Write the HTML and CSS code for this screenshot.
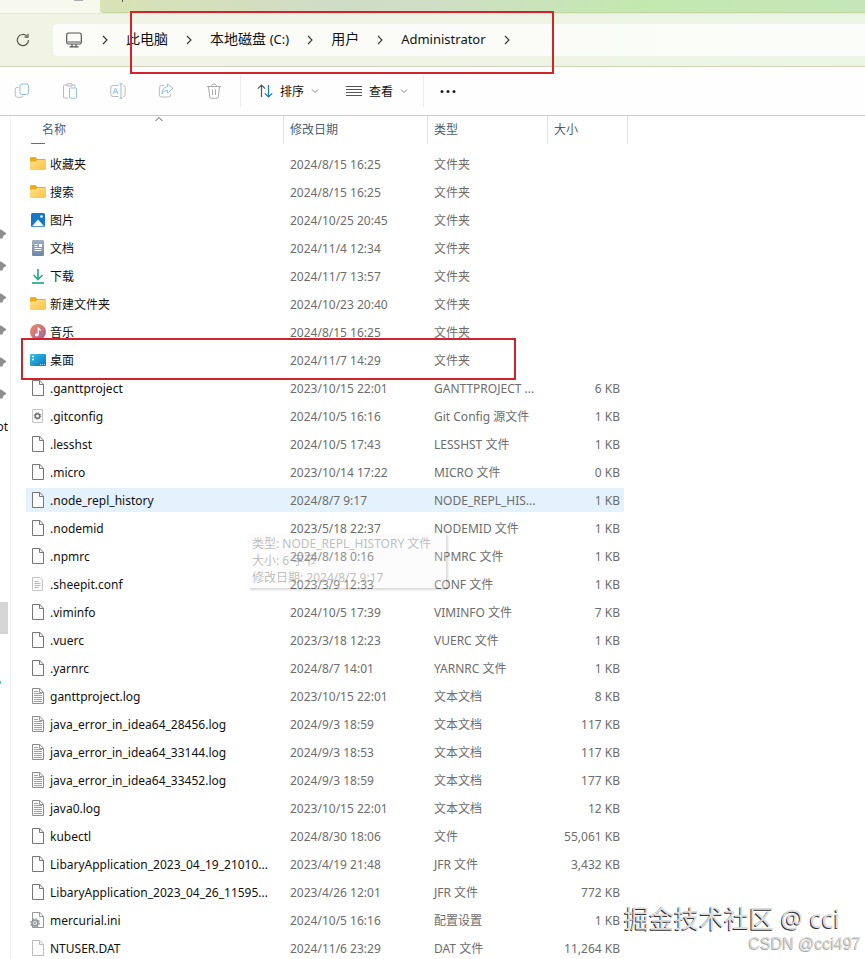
FILE: index.html
```
<!DOCTYPE html>
<html lang="zh-CN">
<head>
    <meta charset="UTF-8">
    <meta name="viewport" content="width=device-width, initial-scale=1.0">
    <title>Administrator</title>
    <link rel="stylesheet" href="styles.css">
</head>
<body>
    <!-- Icon sprite -->
    <svg class="sprite" aria-hidden="true">
        <defs>
            <linearGradient id="gFolder" x1="0" y1="0" x2="1" y2="1">
                <stop offset="0" stop-color="#ffe08a"/><stop offset="1" stop-color="#f9c544"/>
            </linearGradient>
            <linearGradient id="gDesk" x1="0" y1="0" x2="1" y2="1">
                <stop offset="0" stop-color="#35c3e0"/><stop offset="1" stop-color="#0a74c4"/>
            </linearGradient>
            <linearGradient id="gMusic" x1="0" y1="0" x2="1" y2="1">
                <stop offset="0" stop-color="#ee8a62"/><stop offset="1" stop-color="#a55f9f"/>
            </linearGradient>
            <linearGradient id="gDoc" x1="0" y1="0" x2="0" y2="1">
                <stop offset="0" stop-color="#9fb0c4"/><stop offset="1" stop-color="#6c86a5"/>
            </linearGradient>
        </defs>
        <symbol id="chevron" viewBox="0 0 8 10"><path d="M2 1l4 4-4 4" fill="none" stroke="#333" stroke-width="1.1"/></symbol>
        <symbol id="caret" viewBox="0 0 8 6"><path d="M1 1.500L4 4.500l3-3" fill="none" stroke="#888" stroke-width="1"/></symbol>
        <symbol id="folder" viewBox="0 0 16 16">
            <path d="M0 2.500C0 1.700.5 1 1.400 1h4.100l1.800 2H14.500c.8 0 1.500.6 1.500 1.400V8H0z" fill="#e9ac1c"/>
            <path d="M0 5.500h5.600L7.400 4H15c.6 0 1 .4 1 1v7.500c0 .8-.6 1.500-1.400 1.500H1.400C.6 14 0 13.300 0 12.500z" fill="url(#gFolder)"/>
        </symbol>
        <symbol id="picture" viewBox="0 0 16 16">
            <rect x="1" y="1" width="14" height="14" rx="1.500" fill="#1479cc"/>
            <path d="M2 14.200l6-6.700 6 6.700z" fill="#fff"/><circle cx="11.500" cy="4.500" r="1.300" fill="#fff"/>
        </symbol>
        <symbol id="document" viewBox="0 0 16 16">
            <rect x="2" width="12" height="16" rx="1.200" fill="url(#gDoc)"/>
            <path d="M4.500 4.500h3M4.500 6.500h3M4.500 8.500h7M4.500 10.500h7" stroke="#fff"/><path d="M9 4h3v3H9z" fill="#fff"/>
        </symbol>
        <symbol id="download" viewBox="0 0 16 16">
            <path d="M8 1v10M3.500 7L8 11.500 12.500 7" fill="none" stroke="#2aaa8d" stroke-width="1.700"/>
            <path d="M2 15h12" stroke="#17a37f" stroke-width="1.600"/>
        </symbol>
        <symbol id="music" viewBox="0 0 16 16">
            <circle cx="8" cy="8" r="8" fill="url(#gMusic)"/>
            <ellipse cx="6.800" cy="10.800" rx="1.900" ry="1.600" fill="#fff"/><path d="M8.200 10.800V3.500c.4 1.600 2 1.600 2.200 3.300" fill="none" stroke="#fff" stroke-width="1.200"/>
        </symbol>
        <symbol id="desktop" viewBox="0 0 16 16">
            <rect y="2" width="16" height="12" rx="1" fill="url(#gDesk)"/>
            <path d="M2 4.500h2M2 7.500h2" stroke="#e8fbff" stroke-width="1.400"/><path d="M10 12.500h1M12 12.500h1M14 12.500h1" stroke="#a9dbf5"/>
        </symbol>
        <symbol id="file" viewBox="0 0 16 16">
            <path d="M2.500.5h7.300l3.700 3.700v11.300h-11z" fill="#fcfcfc" stroke="#777"/><path d="M9.500.5v4h4" fill="none" stroke="#777"/>
        </symbol>
        <symbol id="filePale" viewBox="0 0 16 16">
            <path d="M2.500.5h7.300l3.700 3.700v11.300h-11z" fill="#fdfdfd" stroke="#bbb"/><path d="M9.500.5v4h4" fill="none" stroke="#bbb"/>
        </symbol>
        <symbol id="gearFile" viewBox="0 0 16 16">
            <path d="M2.500 1.500h10v13h-10z" fill="#f8f8f8" stroke="#c5c5c5"/>
            <circle cx="7.500" cy="8" r="2.300" fill="none" stroke="#6b6f70" stroke-width="1.500"/>
            <circle cx="7.500" cy="8" r="3.200" fill="none" stroke="#6b6f70" stroke-dasharray="1.200 1.300"/>
        </symbol>
        <symbol id="textPale" viewBox="0 0 16 16">
            <path d="M2.500 1.500h7.500l2.500 2.500v10.500h-10z" fill="#fbfbfb" stroke="#c4c4c4"/>
            <path d="M4.500 5.500h4M4.500 7.500h6M4.500 9.500h6M4.500 11.500h4" stroke="#b5b5b5"/>
        </symbol>
        <symbol id="log" viewBox="0 0 16 16">
            <path d="M2.500.5h7.300l3.700 3.700v11.300h-11z" fill="#fafafa" stroke="#8c8c8c"/><path d="M9.500.5v4h4" fill="none" stroke="#999"/>
            <path d="M4 3.500h4M4 5.500h8M4 7.500h8M4 9.500h8M4 11.500h8M4 13.500h8" stroke="#a3a3a3"/>
        </symbol>
        <symbol id="ini" viewBox="0 0 16 16">
            <path d="M2.500.5h7.300l3.700 3.700v11.300h-11z" fill="#fcfcfc" stroke="#999"/><path d="M9.500.5v4h4" fill="none" stroke="#999"/>
            <circle cx="5" cy="11" r="3" fill="#dfe3e3" stroke="#8b9292" stroke-width="1.600"/>
            <circle cx="5" cy="11" r="4.300" fill="none" stroke="#8b9292" stroke-width="1.200" stroke-dasharray="1.600 1.780"/><circle cx="5" cy="11" r="1" fill="#8b9292"/>
        </symbol>
        <symbol id="pin" viewBox="0 0 6 12"><path d="M0 1.500h1l5 3.500v1.200L3.500 7.500 2.500 10.500H0z" fill="#8f8f8f"/></symbol>
    </svg>

    <div class="window">
        <div class="tabs">
            <div class="tab-active"><span></span></div>
            <div class="tab-rest"><span></span></div>
        </div>

        <nav class="address">
            <button class="refresh" aria-label="刷新">
                <svg width="14" height="14" viewBox="0 0 14 14" fill="none" stroke="#555" stroke-width="1.200"><path d="M12.500 7A5.600 5.600 0 1 1 10.800 3M8.500 4.200h3.500V.8"/></svg>
            </button>
            <div class="crumbs">
                <svg class="monitor" width="16" height="16" viewBox="0 0 16 16" fill="none" stroke="#555" stroke-width="1.200"><rect x=".7" y="1" width="14.600" height="11" rx="1.800"/><path d="M6 12v2.700M10 12v2.700M3.500 14.800h9M1.500 10h13"/></svg>
                <svg class="chevron"><use href="#chevron"/></svg>
                <a href="#">此电脑</a>
                <svg class="chevron"><use href="#chevron"/></svg>
                <a href="#">本地磁盘 <span class="latin">(C:)</span></a>
                <svg class="chevron"><use href="#chevron"/></svg>
                <a href="#">用户</a>
                <svg class="chevron"><use href="#chevron"/></svg>
                <a href="#" class="latin">Administrator</a>
                <svg class="chevron"><use href="#chevron"/></svg>
            </div>
        </nav>

        <div class="toolbar">
            <div class="tool-group">
                <button disabled aria-label="复制"><svg width="16" height="16" viewBox="0 0 16 16" fill="none"><path d="M4.500 4.500H3A1.800 1.800 0 0 0 1.200 6.300V12A2.300 2.300 0 0 0 3.500 14.300H7A1.800 1.800 0 0 0 8.800 12.500" stroke="#bbb"/><rect x="6" y="1" width="8.500" height="10.500" rx="2" stroke="#93bde2"/></svg></button>
                <button disabled aria-label="粘贴"><svg width="16" height="16" viewBox="0 0 16 16" fill="none"><path d="M5 2H2.500A1 1 0 0 0 1.500 3V14a1 1 0 0 0 1 1H6M10 2h2a1 1 0 0 1 1 1v1.500M5 .8h5v2.200H5z" stroke="#bbb"/><rect x="7.500" y="5" width="7" height="10.200" rx="1" stroke="#93bde2"/></svg></button>
                <button disabled aria-label="重命名"><svg width="16" height="16" viewBox="0 0 16 16" fill="none"><path d="M8.500 2.500H3A2.200 2.200 0 0 0 .8 4.700v6.600A2.200 2.200 0 0 0 3 13.500h5.500M13 2.500a2.200 2.200 0 0 1 2.200 2.200v6.600A2.200 2.200 0 0 1 13 13.500" stroke="#bbb"/><path d="M9.500.8h3M9.500 15.200h3M11 .8v14.400M3 11l2.500-6L8 11M3.900 9h3.200" stroke="#93bde2"/></svg></button>
                <button disabled aria-label="共享"><svg width="16" height="16" viewBox="0 0 16 16" fill="none"><path d="M6 2.500H3.500A2.200 2.200 0 0 0 1.300 4.700v7.100A2.200 2.200 0 0 0 3.500 14H10.500A2.200 2.200 0 0 0 12.700 11.800V10.500" stroke="#bbb"/><path d="M9.500 1l5.500 4.500L9.500 10V7.500C6.500 7.500 5 8.500 4 11c0-4 2-7 5.500-7.300z" stroke="#93bde2"/></svg></button>
                <button disabled aria-label="删除"><svg width="16" height="16" viewBox="0 0 16 16" fill="none" stroke="#aaa"><path d="M1 3.500h14M5.500 3.500C5.500.2 10.500.2 10.500 3.500M2.500 3.500L3.700 14a1.500 1.500 0 0 0 1.500 1.300h5.600A1.500 1.500 0 0 0 12.300 14L13.500 3.500M6.500 6.500v5.500M9.500 6.500v5.500"/></svg></button>
            </div>
            <div class="tool-group menus">
                <button>
                    <svg width="16" height="16" viewBox="0 0 16 16" fill="none" stroke-width="1.200"><path d="M4.500 14V2M.8 5.700L4.500 2l3.700 3.700" stroke="#555"/><path d="M11.500 2v12M7.800 10.300l3.700 3.700 3.700-3.700" stroke="#1377c8"/></svg>
                    <span>排序</span>
                    <svg class="caret"><use href="#caret"/></svg>
                </button>
                <button>
                    <svg width="16" height="16" viewBox="0 0 16 16" stroke="#555"><path d="M0 3.500h16M0 6.500h16M0 9.500h16M0 12.500h16"/></svg>
                    <span>查看</span>
                    <svg class="caret"><use href="#caret"/></svg>
                </button>
            </div>
            <div class="tool-group more">
                <button aria-label="更多"><svg width="16" height="16" viewBox="0 0 16 16" fill="#222"><circle cx="2" cy="8.500" r="1.500"/><circle cx="8" cy="8.500" r="1.500"/><circle cx="14" cy="8.500" r="1.500"/></svg></button>
            </div>
        </div>

        <div class="content">
            <aside class="sidebar">
                <div><svg><use href="#pin"/></svg></div>
                <div><svg><use href="#pin"/></svg></div>
                <div><svg><use href="#pin"/></svg></div>
                <div><svg><use href="#pin"/></svg></div>
                <div><svg><use href="#pin"/></svg></div>
                <div><svg><use href="#pin"/></svg></div>
                <div class="label">ot</div>
                <div class="selected"></div>
                <div class="drive"></div>
            </aside>

            <main>
                <table>
                    <colgroup><col class="c-name"><col class="c-date"><col class="c-type"><col class="c-size"></colgroup>
                    <thead>
                        <tr>
                            <th><div>名称<svg class="sorted" viewBox="0 0 8 6"><path d="M.5 5L4 1.500 7.500 5" fill="none" stroke="#555"/></svg></div></th>
                            <th><div>修改日期</div></th>
                            <th><div>类型</div></th>
                            <th><div>大小</div></th>
                        </tr>
                    </thead>
                    <tbody>
                        <tr><td><svg><use href="#folder"/></svg>收藏夹</td><td>2024/8/15 16:25</td><td>文件夹</td><td></td></tr>
                        <tr><td><svg><use href="#folder"/></svg>搜索</td><td>2024/8/15 16:25</td><td>文件夹</td><td></td></tr>
                        <tr><td><svg><use href="#picture"/></svg>图片</td><td>2024/10/25 20:45</td><td>文件夹</td><td></td></tr>
                        <tr><td><svg><use href="#document"/></svg>文档</td><td>2024/11/4 12:34</td><td>文件夹</td><td></td></tr>
                        <tr><td><svg><use href="#download"/></svg>下载</td><td>2024/11/7 13:57</td><td>文件夹</td><td></td></tr>
                        <tr><td><svg><use href="#folder"/></svg>新建文件夹</td><td>2024/10/23 20:40</td><td>文件夹</td><td></td></tr>
                        <tr><td><svg><use href="#music"/></svg>音乐</td><td>2024/8/15 16:25</td><td>文件夹</td><td></td></tr>
                        <tr><td><svg><use href="#desktop"/></svg>桌面</td><td>2024/11/7 14:29</td><td>文件夹</td><td></td></tr>
                        <tr><td><svg><use href="#file"/></svg>.ganttproject</td><td>2023/10/15 22:01</td><td>GANTTPROJECT ...</td><td>6 KB</td></tr>
                        <tr><td><svg><use href="#gearFile"/></svg>.gitconfig</td><td>2024/10/5 16:16</td><td>Git Config 源文件</td><td>1 KB</td></tr>
                        <tr><td><svg><use href="#file"/></svg>.lesshst</td><td>2024/10/5 17:43</td><td>LESSHST 文件</td><td>1 KB</td></tr>
                        <tr><td><svg><use href="#file"/></svg>.micro</td><td>2023/10/14 17:22</td><td>MICRO 文件</td><td>0 KB</td></tr>
                        <tr class="hover"><td><svg><use href="#file"/></svg>.node_repl_history</td><td>2024/8/7 9:17</td><td>NODE_REPL_HIS...</td><td>1 KB</td></tr>
                        <tr><td><svg><use href="#file"/></svg>.nodemid</td><td>2023/5/18 22:37</td><td>NODEMID 文件</td><td>1 KB</td></tr>
                        <tr><td><svg><use href="#file"/></svg>.npmrc</td><td>2024/8/18 0:16</td><td>NPMRC 文件</td><td>1 KB</td></tr>
                        <tr><td><svg><use href="#textPale"/></svg>.sheepit.conf</td><td>2023/3/9 12:33</td><td>CONF 文件</td><td>1 KB</td></tr>
                        <tr><td><svg><use href="#file"/></svg>.viminfo</td><td>2024/10/5 17:39</td><td>VIMINFO 文件</td><td>7 KB</td></tr>
                        <tr><td><svg><use href="#file"/></svg>.vuerc</td><td>2023/3/18 12:23</td><td>VUERC 文件</td><td>1 KB</td></tr>
                        <tr><td><svg><use href="#file"/></svg>.yarnrc</td><td>2024/8/7 14:01</td><td>YARNRC 文件</td><td>1 KB</td></tr>
                        <tr><td><svg><use href="#log"/></svg>ganttproject.log</td><td>2023/10/15 22:01</td><td>文本文档</td><td>8 KB</td></tr>
                        <tr><td><svg><use href="#log"/></svg>java_error_in_idea64_28456.log</td><td>2024/9/3 18:59</td><td>文本文档</td><td>117 KB</td></tr>
                        <tr><td><svg><use href="#log"/></svg>java_error_in_idea64_33144.log</td><td>2024/9/3 18:53</td><td>文本文档</td><td>117 KB</td></tr>
                        <tr><td><svg><use href="#log"/></svg>java_error_in_idea64_33452.log</td><td>2024/9/3 18:59</td><td>文本文档</td><td>177 KB</td></tr>
                        <tr><td><svg><use href="#log"/></svg>java0.log</td><td>2023/10/15 22:01</td><td>文本文档</td><td>12 KB</td></tr>
                        <tr><td><svg><use href="#file"/></svg>kubectl</td><td>2024/8/30 18:06</td><td>文件</td><td>55,061 KB</td></tr>
                        <tr><td><svg><use href="#file"/></svg>LibaryApplication_2023_04_19_21010...</td><td>2023/4/19 21:48</td><td>JFR 文件</td><td>3,432 KB</td></tr>
                        <tr><td><svg><use href="#file"/></svg>LibaryApplication_2023_04_26_11595...</td><td>2023/4/26 12:01</td><td>JFR 文件</td><td>772 KB</td></tr>
                        <tr><td><svg><use href="#ini"/></svg>mercurial.ini</td><td>2024/10/5 16:16</td><td>配置设置</td><td>1 KB</td></tr>
                        <tr><td><svg><use href="#filePale"/></svg>NTUSER.DAT</td><td>2024/11/6 23:29</td><td>DAT 文件</td><td>11,264 KB</td></tr>
                    </tbody>
                </table>
            </main>
        </div>

        <div class="tooltip" role="tooltip">类型: NODE_REPL_HISTORY 文件<br>大小: 6 字节<br>修改日期: 2024/8/7 9:17</div>
        <div class="mark mark-path"></div>
        <div class="mark mark-row"></div>
        <div class="watermark">掘金技术社区 @ cci</div>
        <div class="watermark-small">CSDN @cci497</div>
    </div>
</body>
</html>
```
FILE: styles.css
```
* {
    margin: 0;
    padding: 0;
    box-sizing: border-box;
}

body {
    font-family: 'Noto Sans', 'Noto Sans CJK SC', sans-serif;
    font-size: 12px;
    color: #111;
    background: #fff;
}

button {
    font: inherit;
    color: inherit;
    background: none;
    border: none;
}

a {
    color: inherit;
    text-decoration: none;
}

svg {
    display: block;
    flex: none;
}

.sprite {
    position: absolute;
    width: 0;
    height: 0;
}

.window {
    position: relative;
    display: flex;
    flex-direction: column;
    height: 100vh;
    overflow: hidden;
}

/* Tab strip */
.tabs {
    display: flex;
    flex: none;
    height: 13px;
    background: #f7f9ef;
}

.tab-active {
    width: 100px;
    padding-left: 74px;
}

.tab-active span {
    display: block;
    width: 9px;
    height: 1px;
    background: #aaa;
}

.tab-rest {
    flex: 1;
    padding-left: 22px;
    border-bottom: 1px solid #c2d7a3;
    border-bottom-left-radius: 4px;
    background: linear-gradient(90deg, #d9e2b4, #d0dcc6 30%, #cfdfc4 45%, #c3e8af 70%, #c5e7b8);
}

.tab-rest span {
    display: block;
    width: 1px;
    height: 2px;
    background: #555;
}

/* Address bar */
.address {
    display: flex;
    align-items: center;
    flex: none;
    height: 54px;
    padding-left: 16px;
    border-top: 1px solid #e5ead6;
    border-bottom: 1px solid #d0d4ba;
    background: linear-gradient(90deg, #f1f4e3, #eff3e5 50%, #eaf6e2);
}

.refresh {
    width: 37px;
}

.crumbs {
    display: flex;
    align-items: center;
    flex: 1;
    gap: 17px;
    height: 32px;
    padding-left: 13px;
    border-radius: 4px 0 0 4px;
    background: rgba(255, 255, 255, 0.75);
    font-size: 14px;
    line-height: 20px;
    white-space: nowrap;
}

.crumbs a {
    padding-bottom: 2px;
}

.latin {
    font-size: 13px;
}

.monitor {
    margin-right: 2px;
}

.chevron {
    width: 8px;
    height: 10px;
}

/* Toolbar */
.toolbar {
    display: flex;
    align-items: center;
    flex: none;
    height: 49px;
    padding-left: 14px;
    border-bottom: 1px solid #cfd1b2;
    background: #fefefe;
}

.tool-group {
    display: flex;
    align-items: center;
    gap: 32px;
    height: 32px;
    padding-right: 18px;
    border-right: 1px solid #ececec;
}

.menus {
    gap: 27px;
    padding: 0 15px 0 16px;
}

.menus button {
    display: flex;
    align-items: center;
    gap: 7px;
}

.caret {
    width: 8px;
    height: 6px;
}

.more {
    padding-left: 16px;
    border: none;
}

/* Content */
.content {
    display: flex;
    flex: 1;
    min-height: 0;
}

.sidebar {
    flex: none;
    width: 11px;
    padding-top: 102px;
    border-right: 1px solid #f1f1f1;
    overflow: hidden;
}

.sidebar div {
    display: flex;
    align-items: center;
    height: 32px;
}

.sidebar svg {
    width: 6px;
    height: 12px;
}

.sidebar .label {
    width: 8px;
    justify-content: flex-end;
    overflow: hidden;
}

.sidebar .selected {
    width: 8px;
    margin-top: 160px;
    background: #d5d5d5;
}

.sidebar .drive {
    width: 1px;
    height: 3px;
    margin-top: 47px;
    background: #4cc9b8;
}

main {
    flex: 1;
    min-width: 0;
    padding-left: 15px;
    overflow: hidden;
}

/* File list */
table {
    width: 602px;
    table-layout: fixed;
    border-collapse: separate;
    border-spacing: 0;
}

.c-name {
    width: 258px;
}

.c-date {
    width: 144px;
}

.c-type {
    width: 120px;
}

.c-size {
    width: 80px;
}

th {
    height: 34px;
    vertical-align: top;
    text-align: left;
    font-weight: normal;
    color: #4c5d75;
}

th div {
    position: relative;
    height: 28px;
    padding-left: 6px;
    border-right: 1px solid #e3e3e3;
    line-height: 28px;
}

th:first-child div {
    padding-left: 16px;
}

th:first-child::after {
    content: '';
    display: block;
    width: 14px;
    height: 1px;
    margin: -1px 0 0 5px;
    background: #8a4fc0;
}

.sorted {
    position: absolute;
    top: 0;
    left: 50%;
    width: 8px;
    height: 6px;
}

td {
    height: 28px;
    padding-top: 2px;
    padding-left: 6px;
    border: solid transparent;
    border-width: 2px 0;
    background-clip: padding-box;
    color: #6d6d6d;
    line-height: 22px;
    white-space: nowrap;
}

td:first-child {
    display: flex;
    align-items: center;
    gap: 4px;
    padding-left: 4px;
    color: #111;
}

td:last-child {
    padding-right: 4px;
    border-right-width: 4px;
    text-align: right;
}

td svg {
    width: 16px;
    height: 16px;
    margin-top: -2px;
}

.hover td {
    background-color: #e4f2fd;
}

/* Overlays */
.tooltip {
    position: absolute;
    top: 533px;
    left: 248px;
    width: 198px;
    padding: 2px 4px;
    background: rgba(245, 245, 245, 0.25);
    box-shadow: 2px 2px 2px rgba(0, 0, 0, 0.15);
    color: rgba(90, 90, 90, 0.4);
    line-height: 17px;
    white-space: nowrap;
}

.mark {
    position: absolute;
    border: 2px solid #d2232a;
}

.mark-path {
    top: 11px;
    left: 130px;
    width: 424px;
    height: 63px;
}

.mark-row {
    top: 338px;
    left: 21px;
    width: 495px;
    height: 42px;
}

.watermark {
    position: absolute;
    right: 25px;
    bottom: 23px;
    color: #ddd;
    font-size: 25px;
    line-height: 36px;
    text-shadow: -1px 1px 0 #333;
}

.watermark-small {
    position: absolute;
    right: 4px;
    bottom: 4px;
    color: #d8d8d8;
    font-family: 'Liberation Sans', sans-serif;
    font-size: 16px;
    line-height: 22px;
    text-shadow: -1px 1px 0 #aaa;
}
```
